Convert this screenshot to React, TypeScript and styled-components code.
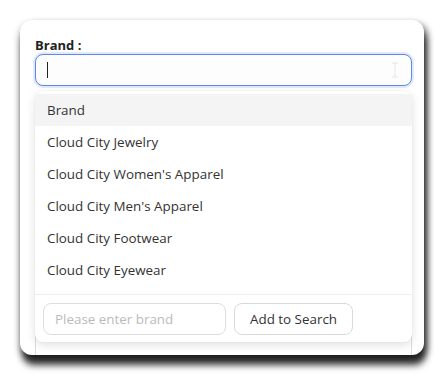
import React from "react";
import styled, { createGlobalStyle } from "styled-components";

const Global = createGlobalStyle`
  html, body { margin: 0; padding: 0; background: #ffffff; }
  body { font-family: "Open Sans", "Noto Sans", sans-serif; color: #333; }
  * { box-sizing: border-box; }
`;

const Page = styled.div`
  width: 444px;
  height: 375px;
  padding: 20px 20px 0 20px;
`;

const Card = styled.div`
  position: relative;
  width: 404px;
  height: 335px;
  background: #fff;
  border-radius: 12px;
  padding: 16px 12px 0 15px;
  box-shadow: 2px 10px 7px rgba(0, 0, 0, 0.8), 4px 3px 6px rgba(0, 0, 0, 0.4), -2px 3px 6px rgba(0,0,0,0.15);
  overflow: hidden;
`;

const Label = styled.div`
  font-size: 13px;
  font-weight: 700;
  color: #222;
  line-height: 18px;
  height: 18px;
`;

const InputBox = styled.div`
  height: 32px;
  border: 1.5px solid #5b87e8;
  border-radius: 8px;
  box-shadow: 0 0 0 2px rgba(91, 135, 232, 0.18);
  display: flex;
  align-items: center;
  justify-content: space-between;
  padding: 0 12px 0 11px;
  background: #fdfdfd;
`;

const Caret = styled.span`
  width: 1px;
  height: 16px;
  background: #222;
`;

const ListBox = styled.div`
  margin-top: 6px;
  height: 400px;
  border: 1px solid #ddd;
  border-radius: 8px;
`;

const Dropdown = styled.div`
  position: absolute;
  left: 15px;
  top: 71px;
  width: 377px;
  background: #fff;
  border-radius: 8px;
  box-shadow: 0 3px 10px rgba(0, 0, 0, 0.12), 0 0 2px rgba(0,0,0,0.06);
  padding-top: 3px;
  overflow: hidden;
`;

const Item = styled.div<{ $active?: boolean }>`
  height: 32px;
  line-height: 32px;
  padding: 0 12px;
  font-size: 13.4px;
  color: #333;
  background: ${(p) => (p.$active ? "#f4f4f4" : "transparent")};
`;

const Footer = styled.div`
  margin-top: 8px;
  border-top: 1px solid #eee;
  padding: 8px 8px 7px 8px;
  display: flex;
  gap: 8px;
`;

const SmallInput = styled.div`
  width: 183px;
  height: 32px;
  border: 1px solid #ddd;
  border-radius: 8px;
  font-size: 13.4px;
  color: #bbb;
  display: flex;
  align-items: center;
  padding: 0 11px;
`;

const Button = styled.div`
  width: 119px;
  height: 32px;
  border: 1px solid #d9d9d9;
  border-radius: 8px;
  font-size: 13.4px;
  color: #333;
  display: flex;
  align-items: center;
  justify-content: center;
`;

const brands = [
  "Brand",
  "Cloud City Jewelry",
  "Cloud City Women's Apparel",
  "Cloud City Men's Apparel",
  "Cloud City Footwear",
  "Cloud City Eyewear",
];

export default function App() {
  return (
    <>
      <Global />
      <Page>
        <Card>
          <Label>Brand :</Label>
          <InputBox>
            <Caret />
            <svg width="8" height="16" viewBox="0 0 8 16">
              <path d="M1 1h6M4 1v14M1 15h6" stroke="#e6e6e6" strokeWidth="1" fill="none" />
            </svg>
          </InputBox>
          <ListBox />
          <Dropdown>
            {brands.map((b, i) => (
              <Item key={b} $active={i === 0}>
                {b}
              </Item>
            ))}
            <Footer>
              <SmallInput>Please enter brand</SmallInput>
              <Button>Add to Search</Button>
            </Footer>
          </Dropdown>
        </Card>
      </Page>
    </>
  );
}
